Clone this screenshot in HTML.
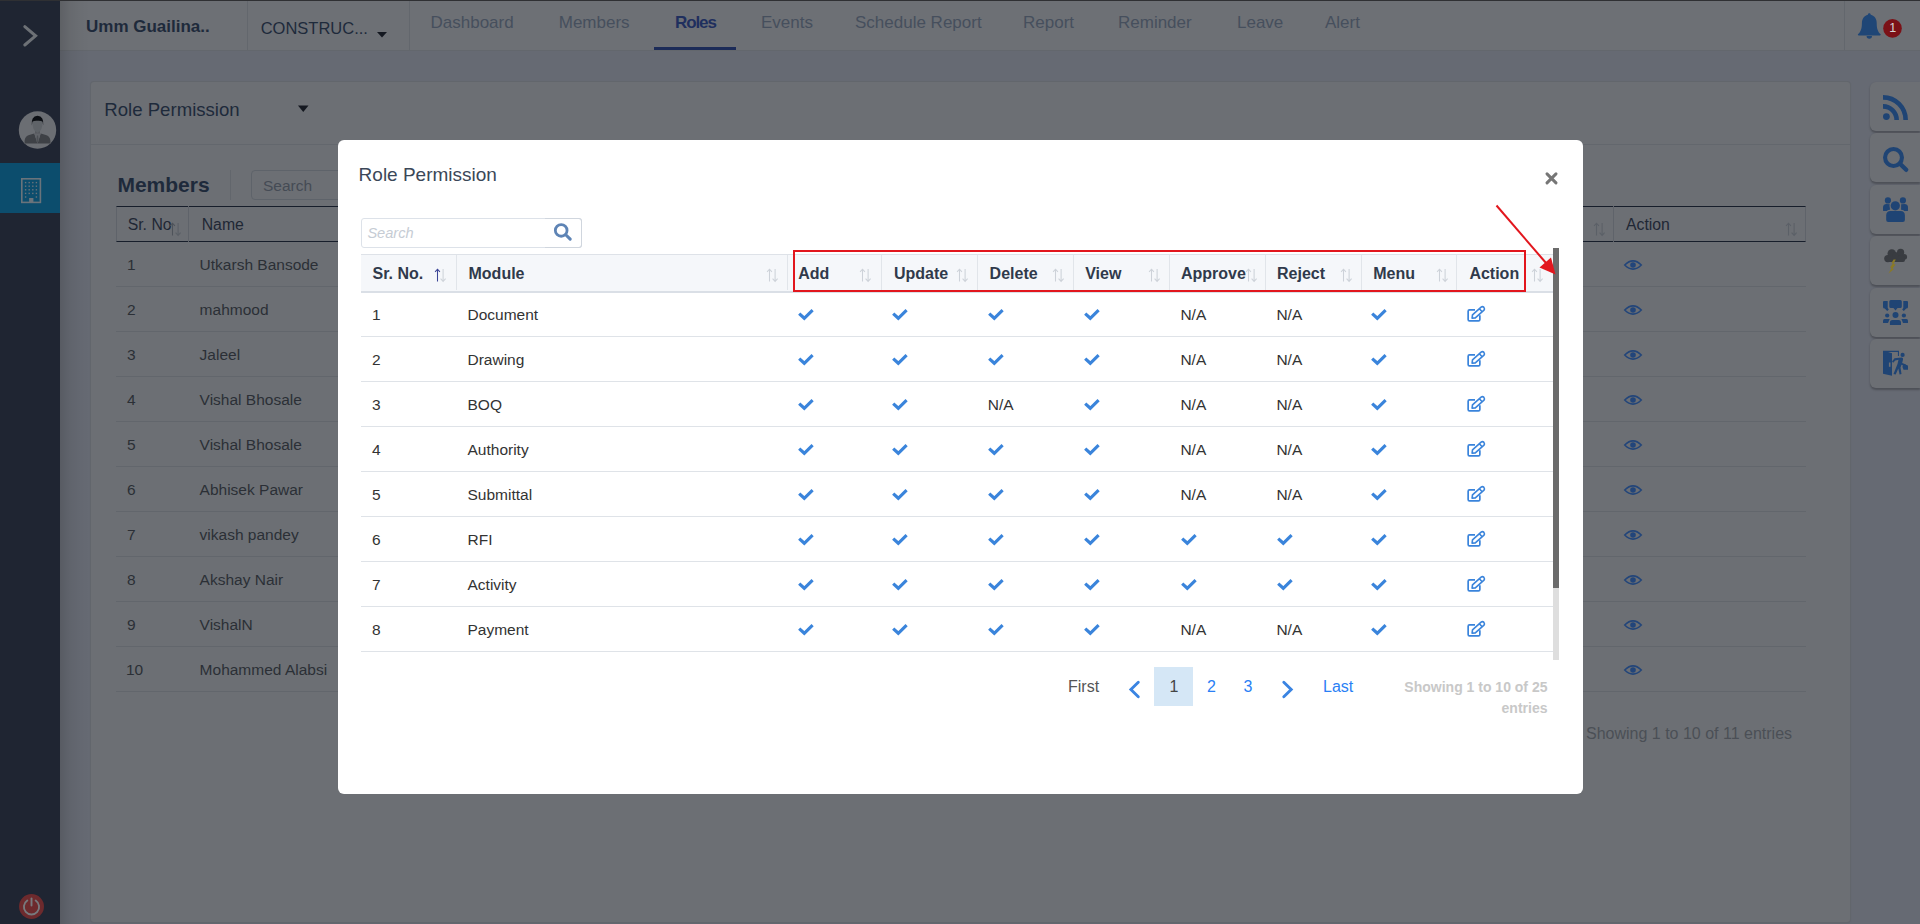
<!DOCTYPE html><html><head><meta charset="utf-8"><style>
html,body{margin:0;padding:0;width:1920px;height:924px;overflow:hidden;background:#666a73}
.t{position:absolute;white-space:nowrap;line-height:1em;font-family:"Liberation Sans",sans-serif}
.r{position:absolute}
svg{position:absolute;overflow:visible}
</style></head><body>
<div class="r" style="left:0px;top:0px;width:1920px;height:924px;background:#666a73;"></div><div class="r" style="left:0px;top:0px;width:1920px;height:1px;background:#2f3033;"></div><div class="r" style="left:0px;top:1px;width:60px;height:923px;background:#1f2532;"></div><div class="r" style="left:0px;top:163px;width:60px;height:50px;background:#0c4d6d;"></div><div class="r" style="left:60px;top:1px;width:1860px;height:49px;background:#6d7075;"></div><div class="r" style="left:60px;top:50px;width:1860px;height:1px;background:#63676d;"></div><div class="r" style="left:247px;top:1px;width:1px;height:49px;background:#63676d;"></div><div class="r" style="left:409px;top:1px;width:1px;height:49px;background:#63676d;"></div><div class="r" style="left:1844px;top:1px;width:1px;height:49px;background:#63676d;"></div><div class="r" style="left:60px;top:1px;width:30px;height:923px;background:linear-gradient(90deg,rgba(0,0,0,0.14),rgba(0,0,0,0.06) 35%,rgba(0,0,0,0.02) 70%,rgba(0,0,0,0));"></div><div class="t" style="left:86.00px;top:17.91px;font-size:17px;color:#1e2a3b;font-weight:700;">Umm Guailina..</div><div class="t" style="left:260.70px;top:20.03px;font-size:16.5px;color:#1e2a3b;font-weight:400;">CONSTRUC...</div><svg style="left:0;top:0" width="1920" height="60"><path d="M377 32 L387 32 L382 37.5 Z" fill="#141820"/></svg><div class="t" style="left:430.50px;top:14.36px;font-size:17px;color:#464f5d;font-weight:400;">Dashboard</div><div class="t" style="left:558.75px;top:14.36px;font-size:17px;color:#464f5d;font-weight:400;">Members</div><div class="t" style="left:761.00px;top:14.36px;font-size:17px;color:#464f5d;font-weight:400;">Events</div><div class="t" style="left:855.00px;top:14.36px;font-size:17px;color:#464f5d;font-weight:400;">Schedule Report</div><div class="t" style="left:1023.00px;top:14.36px;font-size:17px;color:#464f5d;font-weight:400;">Report</div><div class="t" style="left:1118.00px;top:14.36px;font-size:17px;color:#464f5d;font-weight:400;">Reminder</div><div class="t" style="left:1237.00px;top:14.36px;font-size:17px;color:#464f5d;font-weight:400;">Leave</div><div class="t" style="left:1325.00px;top:14.36px;font-size:17px;color:#464f5d;font-weight:400;">Alert</div><div class="t" style="left:675.00px;top:14.36px;font-size:17px;color:#1f2f5e;font-weight:700;letter-spacing:-1.1px">Roles</div><div class="r" style="left:654px;top:47px;width:82px;height:3px;background:#1c2b58;"></div><div class="r" style="left:91px;top:82px;width:1759px;height:840px;background:#6c6f74;border-radius:3px;box-shadow:0 0 0 1px #62666c,0 1px 3px rgba(0,0,0,0.08)"></div><div class="r" style="left:91px;top:144px;width:1759px;height:1px;background:#63676d;"></div><svg style="left:0;top:0" width="60" height="924"><path d="M24.8 26.6 L35.6 35.8 L24.8 45" fill="none" stroke="#6d7176" stroke-width="3.0" stroke-linecap="round" stroke-linejoin="miter"/><circle cx="37.5" cy="130" r="18.7" fill="#6b6e73"/><path d="M35 129 H40 V135 H35 Z" fill="#56595e"/><path d="M24.6 143.6 V140.5 Q25 136 30 134.8 L34.3 133.6 L37.5 143.6 L40.7 133.6 L45 134.8 Q50 136 50.4 140.5 V143.6 Z" fill="#3e4146"/><path d="M34.3 133.6 L40.7 133.6 L37.5 143.6 Z" fill="#62656a"/><path d="M36.9 135.5 H38.1 L38.6 141.2 L37.5 143.2 L36.4 141.2 Z" fill="#4c4f54"/><path d="M32.3 121 Q32.2 130.5 37.5 133 Q42.8 130.5 42.7 121 Z" fill="#5f6368"/><path d="M31.8 125.5 Q30.8 116.3 37.5 115.8 Q44.2 116.3 43.2 125.5 L42.6 121.8 Q41.5 120.6 37.5 120.8 Q33.5 120.6 32.4 121.8 Z" fill="#0c0f14"/><rect x="21.8" y="178.8" width="18.6" height="23.6" fill="none" stroke="#6a737b" stroke-width="1.6"/><rect x="29.1" y="198" width="4.3" height="4.5" fill="#6a737b"/><g fill="#6a737b"><rect x="24.9" y="181.9" width="1.4" height="1.4"/><rect x="28.5" y="181.9" width="1.4" height="1.4"/><rect x="32.1" y="181.9" width="1.4" height="1.4"/><rect x="35.7" y="181.9" width="1.4" height="1.4"/><rect x="24.9" y="185.5" width="1.4" height="1.4"/><rect x="28.5" y="185.5" width="1.4" height="1.4"/><rect x="32.1" y="185.5" width="1.4" height="1.4"/><rect x="35.7" y="185.5" width="1.4" height="1.4"/><rect x="24.9" y="189.1" width="1.4" height="1.4"/><rect x="28.5" y="189.1" width="1.4" height="1.4"/><rect x="32.1" y="189.1" width="1.4" height="1.4"/><rect x="35.7" y="189.1" width="1.4" height="1.4"/><rect x="24.9" y="192.7" width="1.4" height="1.4"/><rect x="28.5" y="192.7" width="1.4" height="1.4"/><rect x="32.1" y="192.7" width="1.4" height="1.4"/><rect x="35.7" y="192.7" width="1.4" height="1.4"/><rect x="24.9" y="196.3" width="1.4" height="1.4"/><rect x="35.7" y="196.3" width="1.4" height="1.4"/></g><circle cx="31.5" cy="906.5" r="12.5" fill="#6d2a2d"/><path d="M27.3 900.5 A7.6 7.6 0 1 0 35.7 900.5" fill="none" stroke="#777a7e" stroke-width="1.9" stroke-linecap="round"/><path d="M31.5 898.5 L31.5 905.5" stroke="#777a7e" stroke-width="1.9" stroke-linecap="round"/></svg><svg style="left:0;top:0" width="1920" height="60"><path d="M1869.3 13.3 c0.8 0 1.4 0.6 1.4 1.4 c4 0.9 6 4.5 6 8.5 c0 5.5 1.2 8.5 3.7 10.8 c0.6 0.6 0.3 1.5 -0.6 1.5 h-21 c-0.9 0 -1.2 -0.9 -0.6 -1.5 c2.5 -2.3 3.7 -5.3 3.7 -10.8 c0 -4 2 -7.6 6 -8.5 c0 -0.8 0.6 -1.4 1.4 -1.4 z M1866.6 36 h5.4 a2.7 2.7 0 0 1 -5.4 0 z" fill="#1f4676"/><circle cx="1892.5" cy="28.4" r="9.3" fill="#7b1117"/></svg><div class="t" style="left:1889.30px;top:22.02px;font-size:12.5px;color:#d6d3d4;font-weight:400;">1</div><div class="t" style="left:104.30px;top:100.66px;font-size:18.6px;color:#1e2a3b;font-weight:400;">Role Permission</div><svg style="left:0;top:0" width="400" height="130"><path d="M298 105.6 L308.5 105.6 L303.25 112 Z" fill="#141820"/></svg><div class="t" style="left:117.40px;top:173.92px;font-size:21px;color:#1e2a3b;font-weight:700;">Members</div><div class="r" style="left:230px;top:170px;width:1px;height:30px;background:#62666c;"></div><div class="r" style="left:251px;top:170px;width:330px;height:30px;background:transparent;box-sizing:border-box;border:1px solid #5e636a;border-radius:4px"></div><div class="t" style="left:263.00px;top:177.88px;font-size:15.5px;color:#454b55;font-weight:400;">Search</div><div class="r" style="left:116px;top:206px;width:1690px;height:36px;background:transparent;box-sizing:border-box;border-top:1.5px solid #171e2b;border-bottom:1.5px solid #171e2b;border-left:1px solid #5f636a;border-right:1px solid #5f636a"></div><div class="r" style="left:188px;top:206px;width:1px;height:36px;background:#5f636a;"></div><div class="r" style="left:1613px;top:206px;width:1px;height:36px;background:#5f636a;"></div><div class="t" style="left:127.70px;top:217.43px;font-size:15.8px;color:#1f2734;font-weight:400;">Sr. No</div><div class="t" style="left:201.70px;top:217.43px;font-size:15.8px;color:#1f2734;font-weight:400;">Name</div><div class="t" style="left:1626.00px;top:217.43px;font-size:15.8px;color:#1f2734;font-weight:400;">Action</div><div class="t" style="left:127.00px;top:257.38px;font-size:15.5px;color:#2b2f36;font-weight:400;">1</div><div class="t" style="left:199.60px;top:257.38px;font-size:15.5px;color:#2b2f36;font-weight:400;">Utkarsh Bansode</div><div class="r" style="left:116px;top:286px;width:1690px;height:1px;background:#62666c;"></div><div class="t" style="left:127.00px;top:302.38px;font-size:15.5px;color:#2b2f36;font-weight:400;">2</div><div class="t" style="left:199.60px;top:302.38px;font-size:15.5px;color:#2b2f36;font-weight:400;">mahmood</div><div class="r" style="left:116px;top:331px;width:1690px;height:1px;background:#62666c;"></div><div class="t" style="left:127.00px;top:347.38px;font-size:15.5px;color:#2b2f36;font-weight:400;">3</div><div class="t" style="left:199.60px;top:347.38px;font-size:15.5px;color:#2b2f36;font-weight:400;">Jaleel</div><div class="r" style="left:116px;top:376px;width:1690px;height:1px;background:#62666c;"></div><div class="t" style="left:127.00px;top:392.38px;font-size:15.5px;color:#2b2f36;font-weight:400;">4</div><div class="t" style="left:199.60px;top:392.38px;font-size:15.5px;color:#2b2f36;font-weight:400;">Vishal Bhosale</div><div class="r" style="left:116px;top:421px;width:1690px;height:1px;background:#62666c;"></div><div class="t" style="left:127.00px;top:437.38px;font-size:15.5px;color:#2b2f36;font-weight:400;">5</div><div class="t" style="left:199.60px;top:437.38px;font-size:15.5px;color:#2b2f36;font-weight:400;">Vishal Bhosale</div><div class="r" style="left:116px;top:466px;width:1690px;height:1px;background:#62666c;"></div><div class="t" style="left:127.00px;top:482.38px;font-size:15.5px;color:#2b2f36;font-weight:400;">6</div><div class="t" style="left:199.60px;top:482.38px;font-size:15.5px;color:#2b2f36;font-weight:400;">Abhisek Pawar</div><div class="r" style="left:116px;top:511px;width:1690px;height:1px;background:#62666c;"></div><div class="t" style="left:127.00px;top:527.38px;font-size:15.5px;color:#2b2f36;font-weight:400;">7</div><div class="t" style="left:199.60px;top:527.38px;font-size:15.5px;color:#2b2f36;font-weight:400;">vikash pandey</div><div class="r" style="left:116px;top:556px;width:1690px;height:1px;background:#62666c;"></div><div class="t" style="left:127.00px;top:572.38px;font-size:15.5px;color:#2b2f36;font-weight:400;">8</div><div class="t" style="left:199.60px;top:572.38px;font-size:15.5px;color:#2b2f36;font-weight:400;">Akshay Nair</div><div class="r" style="left:116px;top:601px;width:1690px;height:1px;background:#62666c;"></div><div class="t" style="left:127.00px;top:617.38px;font-size:15.5px;color:#2b2f36;font-weight:400;">9</div><div class="t" style="left:199.60px;top:617.38px;font-size:15.5px;color:#2b2f36;font-weight:400;">VishalN</div><div class="r" style="left:116px;top:646px;width:1690px;height:1px;background:#62666c;"></div><div class="t" style="left:126.00px;top:662.38px;font-size:15.5px;color:#2b2f36;font-weight:400;">10</div><div class="t" style="left:199.60px;top:662.38px;font-size:15.5px;color:#2b2f36;font-weight:400;">Mohammed Alabsi</div><div class="r" style="left:116px;top:691px;width:1690px;height:1px;background:#62666c;"></div><div class="t" style="left:1586.00px;top:726.46px;font-size:16px;color:#4b4f56;font-weight:400;">Showing 1 to 10 of 11 entries</div><svg style="left:169px;top:221.5px" width="12" height="15"><path d="M3.5 13.5 V1.3 M1.1 3.9 L3.5 1.2 L5.9 3.9" fill="none" stroke="#4e535a" stroke-width="1.05"/><path d="M9.1 1 V13.3 M6.6 10.7 L9.1 13.4 L11.6 10.7" fill="none" stroke="#5a5f66" stroke-width="1.05"/></svg><svg style="left:1593px;top:221.5px" width="12" height="15"><path d="M3.5 13.5 V1.3 M1.1 3.9 L3.5 1.2 L5.9 3.9" fill="none" stroke="#5b6067" stroke-width="1.05"/><path d="M9.1 1 V13.3 M6.6 10.7 L9.1 13.4 L11.6 10.7" fill="none" stroke="#5b6067" stroke-width="1.05"/></svg><svg style="left:1785px;top:221.5px" width="12" height="15"><path d="M3.5 13.5 V1.3 M1.1 3.9 L3.5 1.2 L5.9 3.9" fill="none" stroke="#5b6067" stroke-width="1.05"/><path d="M9.1 1 V13.3 M6.6 10.7 L9.1 13.4 L11.6 10.7" fill="none" stroke="#5b6067" stroke-width="1.05"/></svg><svg style="left:1623px;top:257.5px" width="20" height="14"><path d="M1.7 7 Q10 -1.2 18.3 7 Q10 15.2 1.7 7 Z" fill="none" stroke="#22457a" stroke-width="1.5"/><circle cx="10" cy="7" r="2.8" fill="#22457a"/></svg><svg style="left:1623px;top:302.5px" width="20" height="14"><path d="M1.7 7 Q10 -1.2 18.3 7 Q10 15.2 1.7 7 Z" fill="none" stroke="#22457a" stroke-width="1.5"/><circle cx="10" cy="7" r="2.8" fill="#22457a"/></svg><svg style="left:1623px;top:347.5px" width="20" height="14"><path d="M1.7 7 Q10 -1.2 18.3 7 Q10 15.2 1.7 7 Z" fill="none" stroke="#22457a" stroke-width="1.5"/><circle cx="10" cy="7" r="2.8" fill="#22457a"/></svg><svg style="left:1623px;top:392.5px" width="20" height="14"><path d="M1.7 7 Q10 -1.2 18.3 7 Q10 15.2 1.7 7 Z" fill="none" stroke="#22457a" stroke-width="1.5"/><circle cx="10" cy="7" r="2.8" fill="#22457a"/></svg><svg style="left:1623px;top:437.5px" width="20" height="14"><path d="M1.7 7 Q10 -1.2 18.3 7 Q10 15.2 1.7 7 Z" fill="none" stroke="#22457a" stroke-width="1.5"/><circle cx="10" cy="7" r="2.8" fill="#22457a"/></svg><svg style="left:1623px;top:482.5px" width="20" height="14"><path d="M1.7 7 Q10 -1.2 18.3 7 Q10 15.2 1.7 7 Z" fill="none" stroke="#22457a" stroke-width="1.5"/><circle cx="10" cy="7" r="2.8" fill="#22457a"/></svg><svg style="left:1623px;top:527.5px" width="20" height="14"><path d="M1.7 7 Q10 -1.2 18.3 7 Q10 15.2 1.7 7 Z" fill="none" stroke="#22457a" stroke-width="1.5"/><circle cx="10" cy="7" r="2.8" fill="#22457a"/></svg><svg style="left:1623px;top:572.5px" width="20" height="14"><path d="M1.7 7 Q10 -1.2 18.3 7 Q10 15.2 1.7 7 Z" fill="none" stroke="#22457a" stroke-width="1.5"/><circle cx="10" cy="7" r="2.8" fill="#22457a"/></svg><svg style="left:1623px;top:617.5px" width="20" height="14"><path d="M1.7 7 Q10 -1.2 18.3 7 Q10 15.2 1.7 7 Z" fill="none" stroke="#22457a" stroke-width="1.5"/><circle cx="10" cy="7" r="2.8" fill="#22457a"/></svg><svg style="left:1623px;top:662.5px" width="20" height="14"><path d="M1.7 7 Q10 -1.2 18.3 7 Q10 15.2 1.7 7 Z" fill="none" stroke="#22457a" stroke-width="1.5"/><circle cx="10" cy="7" r="2.8" fill="#22457a"/></svg><div class="r" style="left:1870px;top:82px;width:50px;height:49px;background:#6c6f74;border-radius:6px 0 0 6px;box-shadow:0 1.5px 2px rgba(0,0,0,0.25)"></div><div class="r" style="left:1870px;top:133px;width:50px;height:49px;background:#6c6f74;border-radius:6px 0 0 6px;box-shadow:0 1.5px 2px rgba(0,0,0,0.25)"></div><div class="r" style="left:1870px;top:185px;width:50px;height:49px;background:#6c6f74;border-radius:6px 0 0 6px;box-shadow:0 1.5px 2px rgba(0,0,0,0.25)"></div><div class="r" style="left:1870px;top:236px;width:50px;height:49px;background:#6c6f74;border-radius:6px 0 0 6px;box-shadow:0 1.5px 2px rgba(0,0,0,0.25)"></div><div class="r" style="left:1870px;top:288px;width:50px;height:49px;background:#6c6f74;border-radius:6px 0 0 6px;box-shadow:0 1.5px 2px rgba(0,0,0,0.25)"></div><div class="r" style="left:1870px;top:339px;width:50px;height:49px;background:#6c6f74;border-radius:6px 0 0 6px;box-shadow:0 1.5px 2px rgba(0,0,0,0.25)"></div><svg style="left:0;top:0" width="1920" height="400"><circle cx="1886.4" cy="116.6" r="3.4" fill="#1f4474"/><path d="M1883 106.35 A13.65 13.65 0 0 1 1896.65 120" fill="none" stroke="#1f4474" stroke-width="4.6"/><path d="M1883 97.35 A22.65 22.65 0 0 1 1905.65 120" fill="none" stroke="#1f4474" stroke-width="4.6"/><circle cx="1893.5" cy="157.5" r="8.45" fill="none" stroke="#1f4474" stroke-width="4.1"/><path d="M1900.5 164.2 L1906.2 169.8" stroke="#1f4474" stroke-width="4.4" stroke-linecap="round"/><circle cx="1887.9" cy="200.4" r="3.1" fill="#1f4474"/><circle cx="1902.9" cy="200.4" r="3.1" fill="#1f4474"/><path d="M1883 210.5 V207.5 Q1883 204 1886.5 204 L1889.9 204.3 L1889.9 211 L1884.5 211 Q1883 211 1883 210.5 Z" fill="#1f4474"/><path d="M1908 210.5 V207.5 Q1908 204 1904.5 204 L1901.1 204.3 L1901.1 211 L1906.5 211 Q1908 211 1908 210.5 Z" fill="#1f4474"/><circle cx="1895.3" cy="205.8" r="5.8" fill="#6c6f74"/><path d="M1885 223 V215.5 Q1885 209.8 1890.5 209.8 L1900.6 209.8 Q1906.1 209.8 1906.1 215.5 V223 Z" fill="#6c6f74"/><circle cx="1895.3" cy="205.8" r="4.6" fill="#1f4474"/><path d="M1886.2 220 V215.5 Q1886.2 211 1890.5 211 L1900.6 211 Q1904.9 211 1904.9 215.5 V220 Q1904.9 222 1902.9 222 H1888.2 Q1886.2 222 1886.2 220 Z" fill="#1f4474"/><g fill="#393c41"><circle cx="1887.8" cy="258.6" r="3.6"/><circle cx="1891.8" cy="253.6" r="4.3"/><circle cx="1896.2" cy="256.5" r="4.2"/><circle cx="1900.6" cy="252.4" r="3.6"/><circle cx="1904.2" cy="256.8" r="2.9"/><circle cx="1901" cy="258.5" r="3.4"/><rect x="1886" y="257" width="19" height="5" rx="2"/></g><path d="M1895.8 259.5 L1893.5 264 L1895.5 264.5 L1892.5 268.5 L1894 269 L1888.5 273.5 L1891.5 268 L1890 267.5 L1892.8 263.5 L1891.5 263 L1893.5 259.5 Z" fill="#8a7a26"/><path d="M1890.8 300 H1900.3 Q1901.8 300 1901.8 301.5 V306.4 Q1901.8 307.9 1900.3 307.9 H1897.5 L1895.5 310.6 L1893.5 307.9 H1890.8 Q1889.3 307.9 1889.3 306.4 V301.5 Q1889.3 300 1890.8 300 Z" fill="#1f4474"/><path d="M1884 301 H1887.7 V308 L1888.8 309.6 L1887.2 311 L1884.8 308.6 Q1883 308.6 1883 307 V302 Q1883 301 1884 301 Z" fill="#1f4474"/><path d="M1907 301 H1903.3 V308 L1902.2 309.6 L1903.8 311 L1906.2 308.6 Q1908 308.6 1908 307 V302 Q1908 301 1907 301 Z" fill="#1f4474"/><circle cx="1887.2" cy="315.5" r="2.1" fill="#1f4474"/><circle cx="1895.5" cy="314.9" r="3" fill="#1f4474"/><circle cx="1903.9" cy="315.5" r="2.1" fill="#1f4474"/><path d="M1884.5 319 H1889.7 L1888 322.9 H1883 V321 Q1883 319 1884.5 319 Z" fill="#1f4474"/><path d="M1906.5 319 H1901.4 L1903 322.9 H1908 V321 Q1908 319 1906.5 319 Z" fill="#1f4474"/><path d="M1889.9 325 V322.5 Q1889.9 320 1892.5 320 H1898.4 Q1901 320 1901 322.5 V325 Z" fill="#1f4474"/><path d="M1883 350.8 H1899 V356 H1897.9 V352 H1888 L1892 353.2 V375.8 L1883 373.8 Z" fill="#1f4474"/><rect x="1888.9" y="362.5" width="1.6" height="4.3" fill="#6c6f74"/><circle cx="1902.6" cy="354.9" r="2.1" fill="#1f4474"/><path d="M1892 361.5 L1894.5 358.2 L1901.5 357.5 Q1903.5 357.5 1903 359.5 L1902.2 363 L1906 364.5 L1905 366 L1901.5 364.8 L1900.5 367.5 L1901.5 374 L1899.6 374.5 L1898.3 368.5 L1895.7 374.5 L1893.5 374 L1897.5 364 L1898.5 359.8 L1895.3 360.5 L1893.2 362.8 Z" fill="#1f4474"/><path d="M1903 364 L1907.5 365.2 Q1908 365.5 1908 366.5 V369.8 L1903.5 369.8 L1902.5 367 Z" fill="#1f4474"/></svg><div class="r" style="left:338px;top:140px;width:1245px;height:654px;background:#ffffff;border-radius:6px"></div><div class="t" style="left:358.60px;top:165.12px;font-size:19px;color:#3b4758;font-weight:400;">Role Permission</div><svg style="left:0;top:0" width="1600" height="800"><path d="M1547 173.9 L1556 182.9 M1556 173.9 L1547 182.9" stroke="#767676" stroke-width="3" stroke-linecap="round"/></svg><div class="r" style="left:361px;top:218px;width:221px;height:30px;background:#fff;box-sizing:border-box;border:1px solid #dde2e9;border-radius:3px"></div><div class="r" style="left:545px;top:218px;width:37px;height:30px;background:transparent;box-sizing:border-box;border:1px solid #d0d6de;border-left:none;border-radius:0 3px 3px 0"></div><div class="t" style="left:367.40px;top:226.44px;font-size:14.6px;color:#c6ccd4;font-weight:400;font-style:italic">Search</div><svg style="left:0;top:0" width="600" height="260"><circle cx="561.2" cy="230.4" r="5.85" fill="none" stroke="#5e84b5" stroke-width="2.8"/><path d="M566 235 L570.2 239.2" stroke="#5e84b5" stroke-width="3.1" stroke-linecap="round"/></svg><div class="r" style="left:361px;top:254px;width:1192px;height:39px;background:#f5f7fa;box-sizing:border-box;border-top:1px solid #dee2e8;border-bottom:2px solid #dadfe6"></div><div class="r" style="left:456px;top:255px;width:1px;height:35px;background:#e1e5ea;"></div><div class="r" style="left:787px;top:255px;width:1px;height:35px;background:#e1e5ea;"></div><div class="r" style="left:881px;top:255px;width:1px;height:35px;background:#e1e5ea;"></div><div class="r" style="left:977px;top:255px;width:1px;height:35px;background:#e1e5ea;"></div><div class="r" style="left:1073px;top:255px;width:1px;height:35px;background:#e1e5ea;"></div><div class="r" style="left:1169px;top:255px;width:1px;height:35px;background:#e1e5ea;"></div><div class="r" style="left:1265px;top:255px;width:1px;height:35px;background:#e1e5ea;"></div><div class="r" style="left:1361px;top:255px;width:1px;height:35px;background:#e1e5ea;"></div><div class="r" style="left:1456px;top:255px;width:1px;height:35px;background:#e1e5ea;"></div><div class="t" style="left:372.50px;top:265.66px;font-size:16px;color:#303a4b;font-weight:700;">Sr. No.</div><div class="t" style="left:468.50px;top:265.66px;font-size:16px;color:#303a4b;font-weight:700;">Module</div><div class="t" style="left:798.20px;top:265.66px;font-size:16px;color:#303a4b;font-weight:700;">Add</div><div class="t" style="left:894.00px;top:265.66px;font-size:16px;color:#303a4b;font-weight:700;">Update</div><div class="t" style="left:989.60px;top:265.66px;font-size:16px;color:#303a4b;font-weight:700;">Delete</div><div class="t" style="left:1085.20px;top:265.66px;font-size:16px;color:#303a4b;font-weight:700;">View</div><div class="t" style="left:1181.00px;top:265.66px;font-size:16px;color:#303a4b;font-weight:700;">Approve</div><div class="t" style="left:1277.00px;top:265.66px;font-size:16px;color:#303a4b;font-weight:700;">Reject</div><div class="t" style="left:1373.20px;top:265.66px;font-size:16px;color:#303a4b;font-weight:700;">Menu</div><div class="t" style="left:1469.40px;top:265.66px;font-size:16px;color:#303a4b;font-weight:700;">Action</div><svg style="left:434.0px;top:268px" width="12" height="15"><path d="M3.5 13.5 V1.3 M1.1 3.9 L3.5 1.2 L5.9 3.9" fill="none" stroke="#3c4596" stroke-width="1.05"/><path d="M9.1 1 V13.3 M6.6 10.7 L9.1 13.4 L11.6 10.7" fill="none" stroke="#cfd4da" stroke-width="1.05"/></svg><svg style="left:766px;top:268px" width="12" height="15"><path d="M3.5 13.5 V1.3 M1.1 3.9 L3.5 1.2 L5.9 3.9" fill="none" stroke="#cdd2d9" stroke-width="1.05"/><path d="M9.1 1 V13.3 M6.6 10.7 L9.1 13.4 L11.6 10.7" fill="none" stroke="#cdd2d9" stroke-width="1.05"/></svg><svg style="left:859.4px;top:268px" width="12" height="15"><path d="M3.5 13.5 V1.3 M1.1 3.9 L3.5 1.2 L5.9 3.9" fill="none" stroke="#cdd2d9" stroke-width="1.05"/><path d="M9.1 1 V13.3 M6.6 10.7 L9.1 13.4 L11.6 10.7" fill="none" stroke="#cdd2d9" stroke-width="1.05"/></svg><svg style="left:956px;top:268px" width="12" height="15"><path d="M3.5 13.5 V1.3 M1.1 3.9 L3.5 1.2 L5.9 3.9" fill="none" stroke="#cdd2d9" stroke-width="1.05"/><path d="M9.1 1 V13.3 M6.6 10.7 L9.1 13.4 L11.6 10.7" fill="none" stroke="#cdd2d9" stroke-width="1.05"/></svg><svg style="left:1052px;top:268px" width="12" height="15"><path d="M3.5 13.5 V1.3 M1.1 3.9 L3.5 1.2 L5.9 3.9" fill="none" stroke="#cdd2d9" stroke-width="1.05"/><path d="M9.1 1 V13.3 M6.6 10.7 L9.1 13.4 L11.6 10.7" fill="none" stroke="#cdd2d9" stroke-width="1.05"/></svg><svg style="left:1147.7px;top:268px" width="12" height="15"><path d="M3.5 13.5 V1.3 M1.1 3.9 L3.5 1.2 L5.9 3.9" fill="none" stroke="#cdd2d9" stroke-width="1.05"/><path d="M9.1 1 V13.3 M6.6 10.7 L9.1 13.4 L11.6 10.7" fill="none" stroke="#cdd2d9" stroke-width="1.05"/></svg><svg style="left:1244.5px;top:268px" width="12" height="15"><path d="M3.5 13.5 V1.3 M1.1 3.9 L3.5 1.2 L5.9 3.9" fill="none" stroke="#cdd2d9" stroke-width="1.05"/><path d="M9.1 1 V13.3 M6.6 10.7 L9.1 13.4 L11.6 10.7" fill="none" stroke="#cdd2d9" stroke-width="1.05"/></svg><svg style="left:1340px;top:268px" width="12" height="15"><path d="M3.5 13.5 V1.3 M1.1 3.9 L3.5 1.2 L5.9 3.9" fill="none" stroke="#cdd2d9" stroke-width="1.05"/><path d="M9.1 1 V13.3 M6.6 10.7 L9.1 13.4 L11.6 10.7" fill="none" stroke="#cdd2d9" stroke-width="1.05"/></svg><svg style="left:1435.6px;top:268px" width="12" height="15"><path d="M3.5 13.5 V1.3 M1.1 3.9 L3.5 1.2 L5.9 3.9" fill="none" stroke="#cdd2d9" stroke-width="1.05"/><path d="M9.1 1 V13.3 M6.6 10.7 L9.1 13.4 L11.6 10.7" fill="none" stroke="#cdd2d9" stroke-width="1.05"/></svg><svg style="left:1531px;top:268px" width="12" height="15"><path d="M3.5 13.5 V1.3 M1.1 3.9 L3.5 1.2 L5.9 3.9" fill="none" stroke="#cdd2d9" stroke-width="1.05"/><path d="M9.1 1 V13.3 M6.6 10.7 L9.1 13.4 L11.6 10.7" fill="none" stroke="#cdd2d9" stroke-width="1.05"/></svg><div class="t" style="left:372.00px;top:306.88px;font-size:15.5px;color:#333;font-weight:400;">1</div><div class="t" style="left:467.50px;top:306.88px;font-size:15.5px;color:#333;font-weight:400;">Document</div><div class="r" style="left:361px;top:336px;width:1192px;height:1px;background:#dfe3e8;"></div><div class="t" style="left:1180.40px;top:306.88px;font-size:15.5px;color:#333;font-weight:400;">N/A</div><div class="t" style="left:1276.40px;top:306.88px;font-size:15.5px;color:#333;font-weight:400;">N/A</div><div class="t" style="left:372.00px;top:351.88px;font-size:15.5px;color:#333;font-weight:400;">2</div><div class="t" style="left:467.50px;top:351.88px;font-size:15.5px;color:#333;font-weight:400;">Drawing</div><div class="r" style="left:361px;top:381px;width:1192px;height:1px;background:#dfe3e8;"></div><div class="t" style="left:1180.40px;top:351.88px;font-size:15.5px;color:#333;font-weight:400;">N/A</div><div class="t" style="left:1276.40px;top:351.88px;font-size:15.5px;color:#333;font-weight:400;">N/A</div><div class="t" style="left:372.00px;top:396.88px;font-size:15.5px;color:#333;font-weight:400;">3</div><div class="t" style="left:467.50px;top:396.88px;font-size:15.5px;color:#333;font-weight:400;">BOQ</div><div class="r" style="left:361px;top:426px;width:1192px;height:1px;background:#dfe3e8;"></div><div class="t" style="left:987.70px;top:396.88px;font-size:15.5px;color:#333;font-weight:400;">N/A</div><div class="t" style="left:1180.40px;top:396.88px;font-size:15.5px;color:#333;font-weight:400;">N/A</div><div class="t" style="left:1276.40px;top:396.88px;font-size:15.5px;color:#333;font-weight:400;">N/A</div><div class="t" style="left:372.00px;top:441.88px;font-size:15.5px;color:#333;font-weight:400;">4</div><div class="t" style="left:467.50px;top:441.88px;font-size:15.5px;color:#333;font-weight:400;">Authority</div><div class="r" style="left:361px;top:471px;width:1192px;height:1px;background:#dfe3e8;"></div><div class="t" style="left:1180.40px;top:441.88px;font-size:15.5px;color:#333;font-weight:400;">N/A</div><div class="t" style="left:1276.40px;top:441.88px;font-size:15.5px;color:#333;font-weight:400;">N/A</div><div class="t" style="left:372.00px;top:486.88px;font-size:15.5px;color:#333;font-weight:400;">5</div><div class="t" style="left:467.50px;top:486.88px;font-size:15.5px;color:#333;font-weight:400;">Submittal</div><div class="r" style="left:361px;top:516px;width:1192px;height:1px;background:#dfe3e8;"></div><div class="t" style="left:1180.40px;top:486.88px;font-size:15.5px;color:#333;font-weight:400;">N/A</div><div class="t" style="left:1276.40px;top:486.88px;font-size:15.5px;color:#333;font-weight:400;">N/A</div><div class="t" style="left:372.00px;top:531.88px;font-size:15.5px;color:#333;font-weight:400;">6</div><div class="t" style="left:467.50px;top:531.88px;font-size:15.5px;color:#333;font-weight:400;">RFI</div><div class="r" style="left:361px;top:561px;width:1192px;height:1px;background:#dfe3e8;"></div><div class="t" style="left:372.00px;top:576.88px;font-size:15.5px;color:#333;font-weight:400;">7</div><div class="t" style="left:467.50px;top:576.88px;font-size:15.5px;color:#333;font-weight:400;">Activity</div><div class="r" style="left:361px;top:606px;width:1192px;height:1px;background:#dfe3e8;"></div><div class="t" style="left:372.00px;top:621.88px;font-size:15.5px;color:#333;font-weight:400;">8</div><div class="t" style="left:467.50px;top:621.88px;font-size:15.5px;color:#333;font-weight:400;">Payment</div><div class="r" style="left:361px;top:651px;width:1192px;height:1px;background:#dfe3e8;"></div><div class="t" style="left:1180.40px;top:621.88px;font-size:15.5px;color:#333;font-weight:400;">N/A</div><div class="t" style="left:1276.40px;top:621.88px;font-size:15.5px;color:#333;font-weight:400;">N/A</div><svg style="left:0;top:0" width="1600" height="700"><path d="M799.20 313.60 L804.30 318.30 L812.60 310.20" fill="none" stroke="#3a84db" stroke-width="3.2" stroke-linecap="butt" stroke-linejoin="miter"/><path d="M893.20 313.60 L898.30 318.30 L906.60 310.20" fill="none" stroke="#3a84db" stroke-width="3.2" stroke-linecap="butt" stroke-linejoin="miter"/><path d="M989.20 313.60 L994.30 318.30 L1002.60 310.20" fill="none" stroke="#3a84db" stroke-width="3.2" stroke-linecap="butt" stroke-linejoin="miter"/><path d="M1085.20 313.60 L1090.30 318.30 L1098.60 310.20" fill="none" stroke="#3a84db" stroke-width="3.2" stroke-linecap="butt" stroke-linejoin="miter"/><path d="M1372.20 313.60 L1377.30 318.30 L1385.60 310.20" fill="none" stroke="#3a84db" stroke-width="3.2" stroke-linecap="butt" stroke-linejoin="miter"/><path d="M1475 309.85 H1469.5 Q1468.15 309.85 1468.15 311.20 V319.50 Q1468.15 320.85 1469.5 320.85 H1478.5 Q1479.85 320.85 1479.85 319.50 V315.30" fill="none" stroke="#3a84db" stroke-width="1.7"/><path d="M1472.1 318.20 L1472.5 314.85 L1481.1 307.10 Q1482.6 306.00 1483.9 307.40 Q1485.0 308.90 1484.0 310.15 L1475.3 317.90 Z M1479.4 308.80 L1482.1 311.80" fill="none" stroke="#3a84db" stroke-width="1.6" stroke-linejoin="round"/><path d="M799.20 358.60 L804.30 363.30 L812.60 355.20" fill="none" stroke="#3a84db" stroke-width="3.2" stroke-linecap="butt" stroke-linejoin="miter"/><path d="M893.20 358.60 L898.30 363.30 L906.60 355.20" fill="none" stroke="#3a84db" stroke-width="3.2" stroke-linecap="butt" stroke-linejoin="miter"/><path d="M989.20 358.60 L994.30 363.30 L1002.60 355.20" fill="none" stroke="#3a84db" stroke-width="3.2" stroke-linecap="butt" stroke-linejoin="miter"/><path d="M1085.20 358.60 L1090.30 363.30 L1098.60 355.20" fill="none" stroke="#3a84db" stroke-width="3.2" stroke-linecap="butt" stroke-linejoin="miter"/><path d="M1372.20 358.60 L1377.30 363.30 L1385.60 355.20" fill="none" stroke="#3a84db" stroke-width="3.2" stroke-linecap="butt" stroke-linejoin="miter"/><path d="M1475 354.85 H1469.5 Q1468.15 354.85 1468.15 356.20 V364.50 Q1468.15 365.85 1469.5 365.85 H1478.5 Q1479.85 365.85 1479.85 364.50 V360.30" fill="none" stroke="#3a84db" stroke-width="1.7"/><path d="M1472.1 363.20 L1472.5 359.85 L1481.1 352.10 Q1482.6 351.00 1483.9 352.40 Q1485.0 353.90 1484.0 355.15 L1475.3 362.90 Z M1479.4 353.80 L1482.1 356.80" fill="none" stroke="#3a84db" stroke-width="1.6" stroke-linejoin="round"/><path d="M799.20 403.60 L804.30 408.30 L812.60 400.20" fill="none" stroke="#3a84db" stroke-width="3.2" stroke-linecap="butt" stroke-linejoin="miter"/><path d="M893.20 403.60 L898.30 408.30 L906.60 400.20" fill="none" stroke="#3a84db" stroke-width="3.2" stroke-linecap="butt" stroke-linejoin="miter"/><path d="M1085.20 403.60 L1090.30 408.30 L1098.60 400.20" fill="none" stroke="#3a84db" stroke-width="3.2" stroke-linecap="butt" stroke-linejoin="miter"/><path d="M1372.20 403.60 L1377.30 408.30 L1385.60 400.20" fill="none" stroke="#3a84db" stroke-width="3.2" stroke-linecap="butt" stroke-linejoin="miter"/><path d="M1475 399.85 H1469.5 Q1468.15 399.85 1468.15 401.20 V409.50 Q1468.15 410.85 1469.5 410.85 H1478.5 Q1479.85 410.85 1479.85 409.50 V405.30" fill="none" stroke="#3a84db" stroke-width="1.7"/><path d="M1472.1 408.20 L1472.5 404.85 L1481.1 397.10 Q1482.6 396.00 1483.9 397.40 Q1485.0 398.90 1484.0 400.15 L1475.3 407.90 Z M1479.4 398.80 L1482.1 401.80" fill="none" stroke="#3a84db" stroke-width="1.6" stroke-linejoin="round"/><path d="M799.20 448.60 L804.30 453.30 L812.60 445.20" fill="none" stroke="#3a84db" stroke-width="3.2" stroke-linecap="butt" stroke-linejoin="miter"/><path d="M893.20 448.60 L898.30 453.30 L906.60 445.20" fill="none" stroke="#3a84db" stroke-width="3.2" stroke-linecap="butt" stroke-linejoin="miter"/><path d="M989.20 448.60 L994.30 453.30 L1002.60 445.20" fill="none" stroke="#3a84db" stroke-width="3.2" stroke-linecap="butt" stroke-linejoin="miter"/><path d="M1085.20 448.60 L1090.30 453.30 L1098.60 445.20" fill="none" stroke="#3a84db" stroke-width="3.2" stroke-linecap="butt" stroke-linejoin="miter"/><path d="M1372.20 448.60 L1377.30 453.30 L1385.60 445.20" fill="none" stroke="#3a84db" stroke-width="3.2" stroke-linecap="butt" stroke-linejoin="miter"/><path d="M1475 444.85 H1469.5 Q1468.15 444.85 1468.15 446.20 V454.50 Q1468.15 455.85 1469.5 455.85 H1478.5 Q1479.85 455.85 1479.85 454.50 V450.30" fill="none" stroke="#3a84db" stroke-width="1.7"/><path d="M1472.1 453.20 L1472.5 449.85 L1481.1 442.10 Q1482.6 441.00 1483.9 442.40 Q1485.0 443.90 1484.0 445.15 L1475.3 452.90 Z M1479.4 443.80 L1482.1 446.80" fill="none" stroke="#3a84db" stroke-width="1.6" stroke-linejoin="round"/><path d="M799.20 493.60 L804.30 498.30 L812.60 490.20" fill="none" stroke="#3a84db" stroke-width="3.2" stroke-linecap="butt" stroke-linejoin="miter"/><path d="M893.20 493.60 L898.30 498.30 L906.60 490.20" fill="none" stroke="#3a84db" stroke-width="3.2" stroke-linecap="butt" stroke-linejoin="miter"/><path d="M989.20 493.60 L994.30 498.30 L1002.60 490.20" fill="none" stroke="#3a84db" stroke-width="3.2" stroke-linecap="butt" stroke-linejoin="miter"/><path d="M1085.20 493.60 L1090.30 498.30 L1098.60 490.20" fill="none" stroke="#3a84db" stroke-width="3.2" stroke-linecap="butt" stroke-linejoin="miter"/><path d="M1372.20 493.60 L1377.30 498.30 L1385.60 490.20" fill="none" stroke="#3a84db" stroke-width="3.2" stroke-linecap="butt" stroke-linejoin="miter"/><path d="M1475 489.85 H1469.5 Q1468.15 489.85 1468.15 491.20 V499.50 Q1468.15 500.85 1469.5 500.85 H1478.5 Q1479.85 500.85 1479.85 499.50 V495.30" fill="none" stroke="#3a84db" stroke-width="1.7"/><path d="M1472.1 498.20 L1472.5 494.85 L1481.1 487.10 Q1482.6 486.00 1483.9 487.40 Q1485.0 488.90 1484.0 490.15 L1475.3 497.90 Z M1479.4 488.80 L1482.1 491.80" fill="none" stroke="#3a84db" stroke-width="1.6" stroke-linejoin="round"/><path d="M799.20 538.60 L804.30 543.30 L812.60 535.20" fill="none" stroke="#3a84db" stroke-width="3.2" stroke-linecap="butt" stroke-linejoin="miter"/><path d="M893.20 538.60 L898.30 543.30 L906.60 535.20" fill="none" stroke="#3a84db" stroke-width="3.2" stroke-linecap="butt" stroke-linejoin="miter"/><path d="M989.20 538.60 L994.30 543.30 L1002.60 535.20" fill="none" stroke="#3a84db" stroke-width="3.2" stroke-linecap="butt" stroke-linejoin="miter"/><path d="M1085.20 538.60 L1090.30 543.30 L1098.60 535.20" fill="none" stroke="#3a84db" stroke-width="3.2" stroke-linecap="butt" stroke-linejoin="miter"/><path d="M1182.20 538.60 L1187.30 543.30 L1195.60 535.20" fill="none" stroke="#3a84db" stroke-width="3.2" stroke-linecap="butt" stroke-linejoin="miter"/><path d="M1278.20 538.60 L1283.30 543.30 L1291.60 535.20" fill="none" stroke="#3a84db" stroke-width="3.2" stroke-linecap="butt" stroke-linejoin="miter"/><path d="M1372.20 538.60 L1377.30 543.30 L1385.60 535.20" fill="none" stroke="#3a84db" stroke-width="3.2" stroke-linecap="butt" stroke-linejoin="miter"/><path d="M1475 534.85 H1469.5 Q1468.15 534.85 1468.15 536.20 V544.50 Q1468.15 545.85 1469.5 545.85 H1478.5 Q1479.85 545.85 1479.85 544.50 V540.30" fill="none" stroke="#3a84db" stroke-width="1.7"/><path d="M1472.1 543.20 L1472.5 539.85 L1481.1 532.10 Q1482.6 531.00 1483.9 532.40 Q1485.0 533.90 1484.0 535.15 L1475.3 542.90 Z M1479.4 533.80 L1482.1 536.80" fill="none" stroke="#3a84db" stroke-width="1.6" stroke-linejoin="round"/><path d="M799.20 583.60 L804.30 588.30 L812.60 580.20" fill="none" stroke="#3a84db" stroke-width="3.2" stroke-linecap="butt" stroke-linejoin="miter"/><path d="M893.20 583.60 L898.30 588.30 L906.60 580.20" fill="none" stroke="#3a84db" stroke-width="3.2" stroke-linecap="butt" stroke-linejoin="miter"/><path d="M989.20 583.60 L994.30 588.30 L1002.60 580.20" fill="none" stroke="#3a84db" stroke-width="3.2" stroke-linecap="butt" stroke-linejoin="miter"/><path d="M1085.20 583.60 L1090.30 588.30 L1098.60 580.20" fill="none" stroke="#3a84db" stroke-width="3.2" stroke-linecap="butt" stroke-linejoin="miter"/><path d="M1182.20 583.60 L1187.30 588.30 L1195.60 580.20" fill="none" stroke="#3a84db" stroke-width="3.2" stroke-linecap="butt" stroke-linejoin="miter"/><path d="M1278.20 583.60 L1283.30 588.30 L1291.60 580.20" fill="none" stroke="#3a84db" stroke-width="3.2" stroke-linecap="butt" stroke-linejoin="miter"/><path d="M1372.20 583.60 L1377.30 588.30 L1385.60 580.20" fill="none" stroke="#3a84db" stroke-width="3.2" stroke-linecap="butt" stroke-linejoin="miter"/><path d="M1475 579.85 H1469.5 Q1468.15 579.85 1468.15 581.20 V589.50 Q1468.15 590.85 1469.5 590.85 H1478.5 Q1479.85 590.85 1479.85 589.50 V585.30" fill="none" stroke="#3a84db" stroke-width="1.7"/><path d="M1472.1 588.20 L1472.5 584.85 L1481.1 577.10 Q1482.6 576.00 1483.9 577.40 Q1485.0 578.90 1484.0 580.15 L1475.3 587.90 Z M1479.4 578.80 L1482.1 581.80" fill="none" stroke="#3a84db" stroke-width="1.6" stroke-linejoin="round"/><path d="M799.20 628.60 L804.30 633.30 L812.60 625.20" fill="none" stroke="#3a84db" stroke-width="3.2" stroke-linecap="butt" stroke-linejoin="miter"/><path d="M893.20 628.60 L898.30 633.30 L906.60 625.20" fill="none" stroke="#3a84db" stroke-width="3.2" stroke-linecap="butt" stroke-linejoin="miter"/><path d="M989.20 628.60 L994.30 633.30 L1002.60 625.20" fill="none" stroke="#3a84db" stroke-width="3.2" stroke-linecap="butt" stroke-linejoin="miter"/><path d="M1085.20 628.60 L1090.30 633.30 L1098.60 625.20" fill="none" stroke="#3a84db" stroke-width="3.2" stroke-linecap="butt" stroke-linejoin="miter"/><path d="M1372.20 628.60 L1377.30 633.30 L1385.60 625.20" fill="none" stroke="#3a84db" stroke-width="3.2" stroke-linecap="butt" stroke-linejoin="miter"/><path d="M1475 624.85 H1469.5 Q1468.15 624.85 1468.15 626.20 V634.50 Q1468.15 635.85 1469.5 635.85 H1478.5 Q1479.85 635.85 1479.85 634.50 V630.30" fill="none" stroke="#3a84db" stroke-width="1.7"/><path d="M1472.1 633.20 L1472.5 629.85 L1481.1 622.10 Q1482.6 621.00 1483.9 622.40 Q1485.0 623.90 1484.0 625.15 L1475.3 632.90 Z M1479.4 623.80 L1482.1 626.80" fill="none" stroke="#3a84db" stroke-width="1.6" stroke-linejoin="round"/></svg><div class="r" style="left:1553px;top:248px;width:6px;height:340px;background:#6b6b6b;"></div><div class="r" style="left:1553px;top:588px;width:6px;height:72px;background:#dedede;"></div><div class="r" style="left:793px;top:250px;width:733px;height:42px;background:transparent;box-sizing:border-box;border:2px solid #e2161d"></div><svg style="left:0;top:0" width="1600" height="300"><path d="M1496.5 205.5 L1546 263" stroke="#e2161d" stroke-width="2"/><path d="M1555.5 274.5 L1539.5 267.5 L1551 257.5 Z" fill="#e2161d"/></svg><div class="t" style="left:1068.00px;top:679.46px;font-size:16px;color:#555;font-weight:400;">First</div><svg style="left:0;top:0" width="1400" height="720"><path d="M1138.3 682.3 L1130.9 689.5 L1138.3 696.7" fill="none" stroke="#3a84e2" stroke-width="2.9" stroke-linecap="round"/><path d="M1283.8 682.3 L1291.2 689.5 L1283.8 696.7" fill="none" stroke="#3a84e2" stroke-width="2.9" stroke-linecap="round"/></svg><div class="r" style="left:1154px;top:667px;width:39px;height:39px;background:#d5e7f6;"></div><div class="t" style="left:1169.50px;top:679.46px;font-size:16px;color:#444;font-weight:400;">1</div><div class="t" style="left:1207.00px;top:679.46px;font-size:16px;color:#2a7ff5;font-weight:400;">2</div><div class="t" style="left:1243.50px;top:679.46px;font-size:16px;color:#2a7ff5;font-weight:400;">3</div><div class="t" style="left:1323.00px;top:679.46px;font-size:16px;color:#2a7ff5;font-weight:400;">Last</div><div class="t" style="right:372.5px;top:677.45px;font-size:14px;font-weight:700;color:#c8c8c8;text-align:right;line-height:20.6px;white-space:normal;width:160px">Showing 1 to 10 of 25 entries</div>
</body></html>
